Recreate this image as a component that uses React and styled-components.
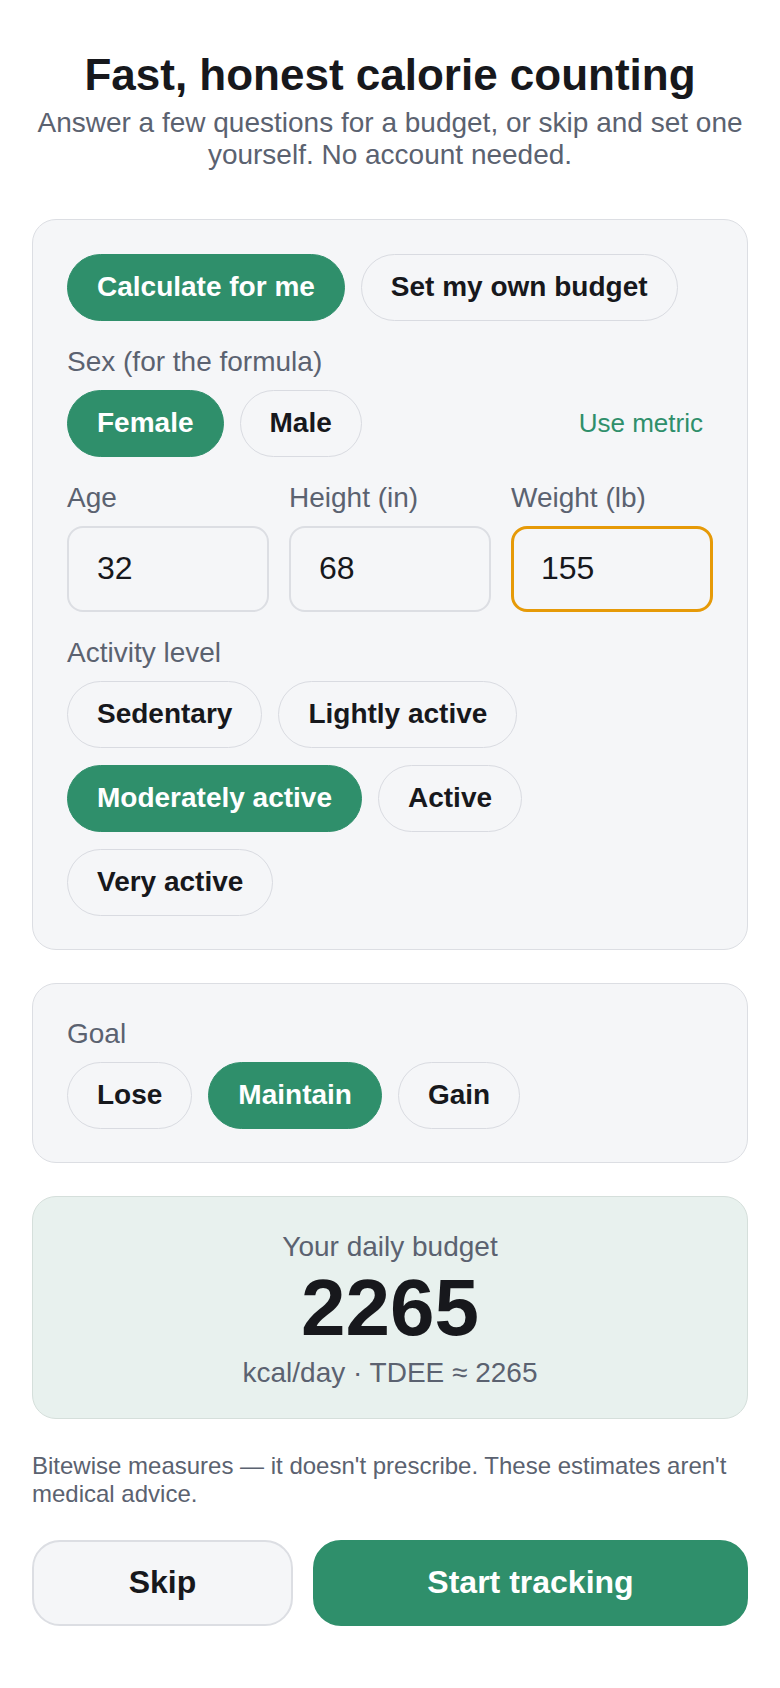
import React from "react";
import styled, { createGlobalStyle } from "styled-components";

const Global = createGlobalStyle`
  html, body { margin: 0; padding: 0; background: #ffffff; }
  body { font-family: "Liberation Sans", Arial, Helvetica, sans-serif; color: #17181c; }
  * { box-sizing: border-box; }
`;

const Page = styled.main`
  padding: 49px 32px 40px;
  display: flex;
  flex-direction: column;
`;

const Title = styled.h1`
  margin: 0;
  text-align: center;
  font-size: 44px;
  line-height: 1.2;
  font-weight: 700;
  color: #17181c;
`;

const Subtitle = styled.p`
  margin: 5px 0 48px;
  text-align: center;
  font-size: 28px;
  line-height: 32px;
  color: #5b6270;
`;

const Card = styled.section`
  background: ${(p) => (p.$tone === "result" ? "#e8f1ee" : "#f5f6f8")};
  border: 1px solid ${(p) => (p.$tone === "result" ? "#d5dfdb" : "#dcdee3")};
  border-radius: 24px;
  padding: ${(p) => (p.$tone === "result" ? "34px 34px 29px" : "34px 34px 33px")};
  display: flex;
  flex-direction: column;
  align-items: ${(p) => (p.$tone === "result" ? "center" : "stretch")};
  margin-bottom: 33px;
`;

const Field = styled.div`
  display: flex;
  flex-direction: column;
  gap: 12px;
  margin-top: ${(p) => (p.$first ? "0" : "25px")};
`;

const Label = styled.div`
  font-size: 28px;
  line-height: 32px;
  color: #5b6270;
`;

const PillRow = styled.div`
  display: flex;
  flex-wrap: wrap;
  align-items: center;
  gap: 17px 16px;
  max-width: ${(p) => p.$maxWidth || "none"};
`;

const Pill = styled.button`
  font-family: inherit;
  font-size: 28px;
  line-height: 32px;
  font-weight: 700;
  height: 67px;
  padding: 0 29px;
  border-radius: 999px;
  border: 1px solid ${(p) => (p.$active ? "#2f8f6b" : "#d9dbe1")};
  background: ${(p) => (p.$active ? "#2f8f6b" : "#f5f6f8")};
  color: ${(p) => (p.$active ? "#ffffff" : "#17181c")};
  cursor: pointer;
`;

const LinkButton = styled.button`
  margin-left: auto;
  font-family: inherit;
  font-size: 26px;
  line-height: 32px;
  padding: 0 10px;
  background: none;
  border: none;
  color: #2f8f6b;
  cursor: pointer;
`;

const InputGrid = styled.div`
  display: grid;
  grid-template-columns: repeat(3, 1fr);
  gap: 20px;
  margin-top: 25px;
`;

const InputField = styled.label`
  display: flex;
  flex-direction: column;
  gap: 12px;
`;

const NumberInput = styled.input`
  width: 100%;
  height: 86px;
  font-family: inherit;
  font-size: 32px;
  color: #17181c;
  padding: 0 ${(p) => (p.$focused ? "27px" : "28px")};
  border-radius: 16px;
  border: ${(p) => (p.$focused ? "3px solid #e69a08" : "2px solid #dcdee3")};
  background: #f5f6f8;
  outline: none;
`;

const ResultLabel = styled.div`
  font-size: 28px;
  line-height: 32px;
  color: #5b6270;
`;

const BigNumber = styled.div`
  font-size: 80px;
  line-height: 80px;
  font-weight: 700;
  color: #17181c;
  margin: 5px 0 9px;
`;

const ResultSub = styled.div`
  font-size: 28px;
  line-height: 32px;
  color: #5b6270;
`;

const Disclaimer = styled.p`
  margin: 0 0 32px;
  font-size: 24px;
  line-height: 28px;
  color: #5b6270;
`;

const Actions = styled.div`
  display: grid;
  grid-template-columns: 3fr 5fr;
  gap: 20px;
`;

const ActionButton = styled.button`
  height: 86px;
  font-family: inherit;
  font-size: 32px;
  font-weight: 700;
  border-radius: 28px;
  border: 2px solid ${(p) => (p.$primary ? "#2f8f6b" : "#dcdee3")};
  background: ${(p) => (p.$primary ? "#2f8f6b" : "#f5f6f8")};
  color: ${(p) => (p.$primary ? "#ffffff" : "#17181c")};
  cursor: pointer;
`;

const activities = [
  ["Sedentary", false],
  ["Lightly active", false],
  ["Moderately active", true],
  ["Active", false],
  ["Very active", false],
];

export default function App() {
  return (
    <>
      <Global />
      <Page>
        <Title>Fast, honest calorie counting</Title>
        <Subtitle>
          Answer a few questions for a budget, or skip and set one yourself. No account needed.
        </Subtitle>

        <Card>
          <PillRow>
            <Pill $active>Calculate for me</Pill>
            <Pill>Set my own budget</Pill>
          </PillRow>

          <Field>
            <Label>Sex (for the formula)</Label>
            <PillRow>
              <Pill $active>Female</Pill>
              <Pill>Male</Pill>
              <LinkButton>Use metric</LinkButton>
            </PillRow>
          </Field>

          <InputGrid>
            <InputField>
              <Label>Age</Label>
              <NumberInput defaultValue="32" />
            </InputField>
            <InputField>
              <Label>Height (in)</Label>
              <NumberInput defaultValue="68" />
            </InputField>
            <InputField>
              <Label>Weight (lb)</Label>
              <NumberInput defaultValue="155" $focused />
            </InputField>
          </InputGrid>

          <Field>
            <Label>Activity level</Label>
            <PillRow $maxWidth="460px">
              {activities.map(([name, active]) => (
                <Pill key={name} $active={active}>
                  {name}
                </Pill>
              ))}
            </PillRow>
          </Field>
        </Card>

        <Card>
          <Field $first>
            <Label>Goal</Label>
            <PillRow>
              <Pill>Lose</Pill>
              <Pill $active>Maintain</Pill>
              <Pill>Gain</Pill>
            </PillRow>
          </Field>
        </Card>

        <Card $tone="result">
          <ResultLabel>Your daily budget</ResultLabel>
          <BigNumber>2265</BigNumber>
          <ResultSub>kcal/day · TDEE ≈ 2265</ResultSub>
        </Card>

        <Disclaimer>
          Bitewise measures — it doesn't prescribe. These estimates aren't medical advice.
        </Disclaimer>

        <Actions>
          <ActionButton>Skip</ActionButton>
          <ActionButton $primary>Start tracking</ActionButton>
        </Actions>
      </Page>
    </>
  );
}
